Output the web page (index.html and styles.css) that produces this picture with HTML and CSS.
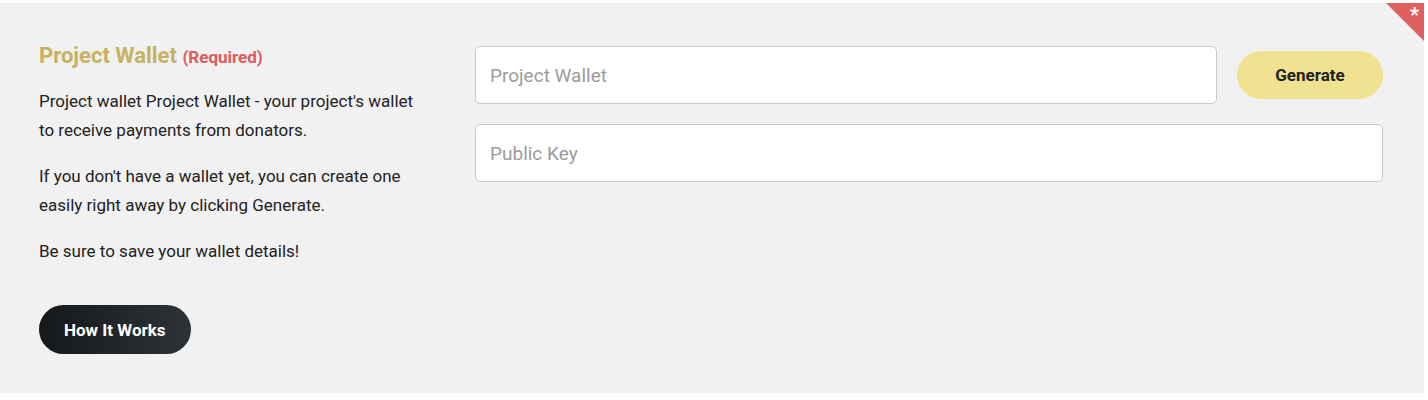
FILE: index.html
```html
<!DOCTYPE html>
<html lang="en">
<head>
<meta charset="UTF-8">
<meta name="viewport" content="width=device-width, initial-scale=1.0">
<title>Project Wallet</title>
<link rel="stylesheet" href="styles.css">
</head>
<body>
<section class="panel-wallet">
    <span class="esquina-requerido">*</span>
    <div class="info-wallet">
        <h2 class="titulo">Project Wallet <span class="requerido">(Required)</span></h2>
        <p>Project wallet Project Wallet - your project's wallet to receive payments from donators.</p>
        <p>If you don't have a wallet yet, you can create one easily right away by clicking Generate.</p>
        <p>Be sure to save your wallet details!</p>
        <button type="button" class="boton-oscuro">How It Works</button>
    </div>
    <form class="campos-wallet">
        <div class="fila">
            <input type="text" id="wallet" name="wallet" placeholder="Project Wallet">
            <button type="button" class="boton-generar">Generate</button>
        </div>
        <input type="text" id="publicKey" name="publicKey" placeholder="Public Key">
    </form>
</section>
</body>
</html>
```

FILE: styles.css
```css
body {
    font-family: Roboto, "Liberation Sans", sans-serif;
    margin: 0;
    padding: 0;
    background-color: #fff;
}
.panel-wallet {
    position: relative;
    margin: 3px 4px 0 0;
    height: 390px;
    box-sizing: border-box;
    padding: 37px 41px 0 39px;
    background-color: #f1f1f1;
    display: grid;
    grid-template-columns: 436px 1fr;
    overflow: hidden;
}
.esquina-requerido {
    position: absolute;
    top: 0;
    right: 0;
    width: 38px;
    height: 38px;
    background-color: #e05f5f;
    clip-path: polygon(0 0, 100% 0, 100% 100%);
    color: #fff;
    font-size: 20px;
    font-weight: bold;
    text-align: right;
    padding-right: 5px;
    padding-top: 2px;
    box-sizing: border-box;
    line-height: 20px;
}
.titulo {
    margin: 0 0 14px;
    font-size: 22px;
    font-weight: bold;
    color: #c6b262;
    line-height: 31px;
}
.requerido {
    font-size: 17px;
    color: #e05a5a;
}
.info-wallet p {
    margin: 0 0 17px;
    font-size: 17px;
    line-height: 29px;
    color: #222;
    max-width: 390px;
}
.boton-oscuro {
    margin-top: 22px;
    background: linear-gradient(to right, #16181a, #2c3338);
    color: #fff;
    padding: 0 25px;
    height: 49px;
    border: none;
    border-radius: 25px;
    font-family: inherit;
    font-size: 17px;
    font-weight: bold;
    cursor: pointer;
}
.campos-wallet {
    display: flex;
    flex-direction: column;
    gap: 20px;
    padding-top: 6px;
}
.fila {
    display: flex;
    align-items: center;
    gap: 20px;
}
input[type="text"] {
    width: 100%;
    height: 58px;
    padding: 0 14px;
    border: 1px solid #c8c8c8;
    border-radius: 5px;
    box-sizing: border-box;
    background-color: #fff;
    font-family: inherit;
    font-size: 19px;
    color: #333;
}
input[type="text"]::placeholder {
    color: #9b9b9b;
}
.boton-generar {
    flex: 0 0 146px;
    height: 48px;
    background-color: #f0e290;
    color: #222;
    border: none;
    border-radius: 24px;
    font-family: inherit;
    font-size: 17px;
    font-weight: bold;
    cursor: pointer;
}
```
